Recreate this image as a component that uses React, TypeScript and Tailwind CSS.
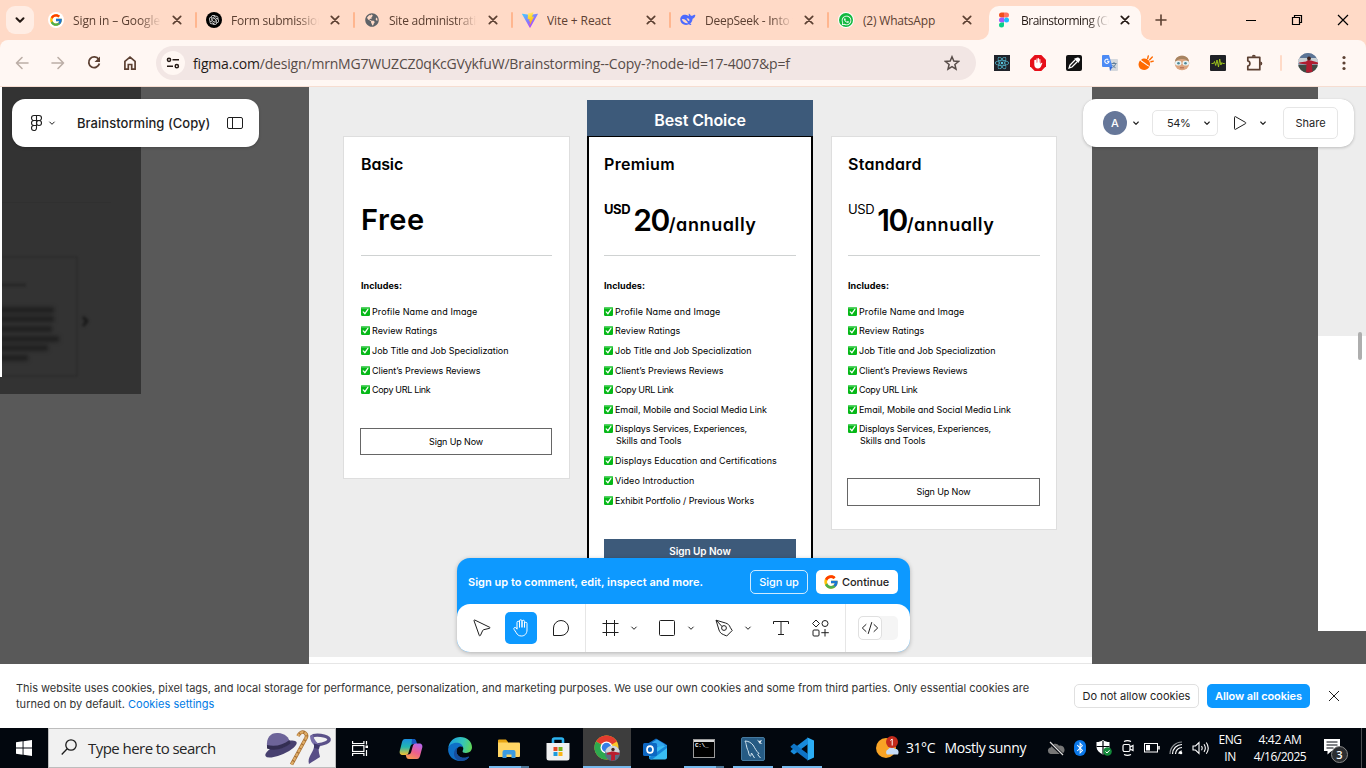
import React from "react";
import { FcGoogle } from "react-icons/fc";
import { FaReact, FaWhatsapp, FaBluetoothB, FaGlobeAmericas } from "react-icons/fa";
import { RiOpenaiFill } from "react-icons/ri";

type IconProps = { d: string; size?: number; sw?: number; className?: string; box?: number };

function Line({ d, size = 16, sw = 1, className = "", box }: IconProps) {
  const b = box ?? size;
  return (
    <svg width={size} height={size} viewBox={`0 0 ${b} ${b}`} fill="none" stroke="currentColor" strokeWidth={sw} strokeLinecap="round" strokeLinejoin="round" className={`shrink-0 ${className}`}>
      <path d={d} />
    </svg>
  );
}

function Slot({ w, children, className = "" }: { w: string; children?: React.ReactNode; className?: string }) {
  return <div className={`flex h-full shrink-0 items-center justify-center ${w} ${className}`}>{children}</div>;
}

/* ---------- Browser chrome ---------- */

function GoogleBadge() {
  return (
    <span className="flex h-4 w-4 items-center justify-center rounded-full bg-white">
      <FcGoogle size={14} />
    </span>
  );
}

function ViteIcon() {
  return (
    <svg width="16" height="16" viewBox="0 0 16 16">
      <defs>
        <linearGradient id="viteA" x1="0" y1="0" x2="0.7" y2="1"><stop stopColor="#41d1ff" /><stop offset="1" stopColor="#bd34fe" /></linearGradient>
        <linearGradient id="viteB" x1="0.4" y1="0" x2="0.6" y2="1"><stop stopColor="#ffea83" /><stop offset="0.3" stopColor="#ffdd35" /><stop offset="1" stopColor="#ffa800" /></linearGradient>
      </defs>
      <path d="M15.8 2.3 8.4 15.4a.5.5 0 0 1-.8 0L.1 2.3a.4.4 0 0 1 .5-.6L8 3l7.3-1.3a.4.4 0 0 1 .5.6z" fill="url(#viteA)" />
      <path d="m11.600.2-5.400 1a.2.2 0 0 0-.2.200l-.3 5.600c0 .2.100.300.300.200l1.500-.3-.4 2.300.200.200 1-.3-.7 3.700c0 .2.200.300.300.100l4-8c.100-.2 0-.3-.2-.3l-1.600.3.900-3.200z" fill="url(#viteB)" />
    </svg>
  );
}

function WhaleIcon() {
  return (
    <svg width="17" height="16" viewBox="0 0 17 16">
      <path d="M.3 7.500C.2 4.300 2.700 2 6 2.400c1.500.1 2.300 1 3.200 1.400.6-.5-.4-1.500.3-2.600.6.9 1.800 1.200 2 2.300 1.500.4 2.400-.6 3.900-1.100.5-.1 1 .1.900.6-.3 2-1.300 3.400-2.900 3.700-.3 2.600-1.300 4.100-2.500 5 .4.500 1 .9 1.300 1.300-1 .4-2 .1-2.800-.5C5.300 14.500.400 12.100.300 7.500z" fill="#4d6bfe" />
      <path d="M2 7.200c2-1 5.300 1.300 6.500 4.200-2.800.4-6-1.500-6.500-4.200z" fill="#ffdac7" />
      <path d="M7 6.200c1.400-.6 2.700.3 3.200 2.200L8.700 9z" fill="#ffdac7" />
    </svg>
  );
}

function WhatsAppIcon() {
  return (
    <span className="flex h-4 w-4 items-center justify-center rounded-full bg-white">
      <span className="flex h-3.5 w-3.5 items-center justify-center rounded-full bg-[#12b83e]"><FaWhatsapp size={11} color="#fff" /></span>
    </span>
  );
}

function FigmaColor() {
  return (
    <svg width="16" height="16" viewBox="0 0 16 16">
      <path d="M5.500.500H8v5H5.500a2.500 2.500 0 0 1 0-5z" fill="#f24e1e" />
      <path d="M8 .500h2.500a2.500 2.500 0 0 1 0 5H8z" fill="#ff7262" />
      <path d="M5.500 5.500H8v5H5.500a2.500 2.500 0 0 1 0-5z" fill="#a259ff" />
      <circle cx="10.500" cy="8" r="2.500" fill="#1abcfe" />
      <path d="M5.500 10.500H8V13a2.500 2.500 0 1 1-2.500-2.500z" fill="#0acf83" />
    </svg>
  );
}

const tabs = [
  { icon: <GoogleBadge />, title: "Sign in – Google", fade: true, tr: "tracking-[-0.1px]" },
  { icon: <span className="flex h-4 w-4 items-center justify-center rounded-full bg-black"><RiOpenaiFill size={12} color="#fff" /></span>, title: "Form submission", fade: true, tr: "tracking-[-0.2px]" },
  { icon: <FaGlobeAmericas size={14} color="#5f6368" />, title: "Site administration", fade: true, tr: "tracking-[-0.25px]" },
  { icon: <ViteIcon />, title: "Vite + React", fade: false, tr: "tracking-[-0.1px]" },
  { icon: <WhaleIcon />, title: "DeepSeek - Into the", fade: true, tr: "tracking-[-0.25px]" },
  { icon: <WhatsAppIcon />, title: "(2) WhatsApp", fade: false, tr: "tracking-[-0.2px]" },
  { icon: <FigmaColor />, title: "Brainstorming (Copy)", fade: true, tr: "tracking-[-0.49px]" },
];

function TabStrip() {
  return (
    <div className="flex h-10 shrink-0 items-center bg-[#ffdac7]">
      <div className="ml-1.5 mr-[6px] flex h-7 w-7 items-center justify-center rounded-[9px] bg-[#ffede4] text-[#241914]">
        <Line d="M4.500 6.200 8 9.700l3.500-3.500" sw={2} />
      </div>
      {tabs.map((t, i) => {
        const active = i === 6;
        return (
          <div key={i} className={`relative flex h-10 items-center ${active ? "w-[154px]" : "w-[158px]"}`}>
            {active && (
              <>
                <div className="absolute bottom-0 left-px right-px top-1.5 rounded-t-[10px] bg-[#fff7f3]" />
                <svg className="absolute -left-[9px] bottom-0" width="10" height="10" viewBox="0 0 10 10"><path d="M10 0v10H0A10 10 0 0 0 10 0z" fill="#fff7f3" /></svg>
                <svg className="absolute -right-[9px] bottom-0" width="10" height="10" viewBox="0 0 10 10"><path d="M0 0v10h10A10 10 0 0 1 0 0z" fill="#fff7f3" /></svg>
              </>
            )}
            <div className="relative ml-2 flex h-4 w-4 items-center justify-center">{t.icon}</div>
            <div className={`relative ml-[9px] h-[17px] w-[88px] overflow-hidden whitespace-nowrap pt-px text-[12px] leading-4 ${active ? "text-[#241914]" : "text-[#5c4032]"} ${t.tr} ${t.fade ? "[mask-image:linear-gradient(to_right,black_75%,transparent_100%)]" : ""}`}>{t.title}</div>
            <div className={`relative ml-2 flex h-4 w-4 items-center justify-center ${active ? "text-[#241914]" : "text-[#5c4032]"}`}>
              <Line d="M4.300 4.300l7.400 7.400M11.700 4.300l-7.400 7.400" sw={1.700} />
            </div>
            {i < 5 && <div className="ml-[10px] h-4 w-0.5 rounded bg-[#ffb68f]" />}
          </div>
        );
      })}
      <Slot w="w-9" className="pl-0.5 text-[#5c4032]"><Line d="M8 3v10M3 8h10" sw={1.600} /></Slot>
      <div className="flex-1" />
      <Slot w="w-[46px]" className="text-black"><svg width="12" height="12"><path d="M1 6.500h10" stroke="currentColor" /></svg></Slot>
      <Slot w="w-[46px]" className="text-black"><svg width="12" height="12" fill="none"><path d="M1.500 3.500h7v7h-7zM3.500 3.500v-2h7v7h-2" stroke="currentColor" strokeWidth="1.200" /></svg></Slot>
      <Slot w="w-[46px]" className="text-black"><svg width="12" height="12"><path d="M1 1l10 10M11 1L1 11" stroke="currentColor" strokeWidth="1.200" /></svg></Slot>
    </div>
  );
}

function Extensions() {
  return (
    <>
      <Slot w="w-9"><span className="flex h-4 w-4 items-center justify-center bg-[#20232a]"><FaReact size={14} color="#58c4dc" /></span></Slot>
      <Slot w="w-9">
        <svg width="16" height="16" viewBox="0 0 16 16"><path d="M4.700 0h6.600L16 4.700v6.600L11.300 16H4.700L0 11.300V4.700z" fill="#e60f19" /><path d="M4.300 7.300v2.500c0 2.300 1.500 3.700 3.700 3.700 1.900 0 2.600-1 3.100-2.200l1.300-3.200c-.5-.5-1.200-.3-1.500.3l-.5.7V4.500c0-.7-1.100-.7-1.100 0v3h-.3V3.400c0-.7-1.100-.7-1.100 0v4.100h-.3V3.700c0-.7-1.100-.7-1.100 0v4h-.3V5.200c0-.7-1.900-.7-1.900 0z" fill="#fff" /></svg>
      </Slot>
      <Slot w="w-9">
        <svg width="16" height="16" viewBox="0 0 16 16"><rect width="16" height="16" rx="2" fill="#111" /><path d="M9 5 4 10l-.9 2.900L6 12l5-5" fill="none" stroke="#fff" strokeWidth="1.300" /><path d="m8 3.700 4.300 4.300 1.700-2.800c.7-1.300-1.200-3.200-2.600-2.600z" fill="#fff" /></svg>
      </Slot>
      <Slot w="w-9">
        <svg width="16" height="16" viewBox="0 0 16 16"><path d="M6 4h9a1 1 0 0 1 1 1v10a1 1 0 0 1-1 1H8z" fill="#d5d8dc" /><path d="M9.500 8.500h5M12 7v1.500m1.800 0c-.6 2-2 3.300-3.300 4M10.500 10c.6 1.200 1.800 2.200 3 2.700" stroke="#5f7f9c" fill="none" /><path d="M1 0h6l3.500 12H1a1 1 0 0 1-1-1V1a1 1 0 0 1 1-1z" fill="#4c8bf5" /><path d="M7.500 12h3L8 16z" fill="#3367d6" /><path d="M6.300 4.700A2.100 2.100 0 1 0 7 6.300H5" fill="none" stroke="#fff" strokeWidth="1.100" /></svg>
      </Slot>
      <Slot w="w-9">
        <svg width="16" height="16" viewBox="0 0 16 16"><path d="M2 5.500C-.3 8.300.2 12.600 3.300 14.300c3 1.600 6.800.4 8.200-2.500z" fill="#ff6a00" /><path d="M3 5C5 2.800 9 3.200 10.800 5.600c1.200 1.700 1.500 3.800.9 5.700z" fill="#ff6a00" /><path d="M9.700 3.300 10.300.9M11.700 4.700l2.600-2.600M13 6.700l2.300-.6" stroke="#ff6a00" strokeWidth="1.400" strokeLinecap="round" /><path d="M3 6l7.500 5.200" stroke="#fff7f3" strokeWidth=".8" /></svg>
      </Slot>
      <Slot w="w-9">
        <svg width="16" height="16" viewBox="0 0 16 16"><circle cx="8" cy="8" r="7.300" fill="#dca57f" /><path d="M1 7C1 3 4 .7 8 .7S15 3 15 7c-2-2-4-3-7-3S3 5 1 7z" fill="#a78461" /><rect x="1" y="5.800" width="6.500" height="4.700" rx="2.300" fill="#e8f3f5" /><rect x="8.500" y="5.800" width="6.500" height="4.700" rx="2.300" fill="#e8f3f5" /><circle cx="4.500" cy="8.200" r="1.300" fill="#4e8796" /><circle cx="11.500" cy="8.200" r="1.300" fill="#4e8796" /><path d="M6 12.800h4" stroke="#b0674f" /></svg>
      </Slot>
      <Slot w="w-9">
        <svg width="16" height="16" viewBox="0 0 16 16"><rect width="16" height="16" rx="1" fill="#1f2125" /><path d="M1.500 8.500h2l1-2 1.200 4L7 5l1.500 7L9.700 4l1.200 6 1-2.500.8 1h2" fill="none" stroke="#a5cf1b" strokeWidth=".9" /></svg>
      </Slot>
      <Slot w="w-9" className="text-[#5c4032]">
        <svg width="18" height="18" viewBox="0 0 18 18" fill="none"><path d="M2.800 3.300h12v12.400h-12v-3.700c2.800-.3 2.800-4.700 0-5z" stroke="currentColor" strokeWidth="1.700" strokeLinejoin="round" /><path d="M6.800 2.800a2 2 0 0 1 4 0zM15.300 7.500a2 2 0 0 1 0 4z" fill="currentColor" /></svg>
      </Slot>
      <Slot w="w-[18px]"><div className="h-4 w-0.5 rounded bg-[#ffdac7]" /></Slot>
      <Slot w="w-9">
        <svg width="20" height="20" viewBox="0 0 20 20"><defs><clipPath id="pf"><circle cx="10" cy="10" r="10" /></clipPath></defs><g clipPath="url(#pf)"><rect width="20" height="20" fill="#8b9cae" /><rect width="20" height="7" fill="#5c7495" /><path d="M0 5h20v5H0z" fill="#c9cfd3" /><path d="M0 12h20v8H0z" fill="#3f4a42" /><path d="M1 9.500l7-1 2-1.500 3 .5 7 2v1.800l-6-.3.5 8.500H8l.5-8-7-1z" fill="#b01d30" /><circle cx="11" cy="5.500" r="1.900" fill="#41231d" /></g></svg>
      </Slot>
      <Slot w="w-9" className="text-[#5c4032]"><svg width="4" height="16" fill="currentColor"><circle cx="2" cy="2.500" r="1.600" /><circle cx="2" cy="8" r="1.600" /><circle cx="2" cy="13.500" r="1.600" /></svg></Slot>
    </>
  );
}

function AddressBar() {
  return (
    <div className="shrink-0 bg-[#ffdac7]">
      <div className="flex h-[47px] items-center rounded-t-[8px] border-b border-[#f6ddd1] bg-[#fff7f3] pl-1">
        <Slot w="w-9" className="text-[#bcaea7]"><Line d="M14 8H2.500M8 2.500 2.500 8 8 13.500" sw={1.600} /></Slot>
        <Slot w="w-9" className="text-[#bcaea7]"><Line d="M2 8h11.500M8 2.500 13.500 8 8 13.500" sw={1.600} /></Slot>
        <Slot w="w-9" className="text-[#5c4032]"><svg width="16" height="16" fill="none"><path d="M12.700 4.300A5.400 5.400 0 1 0 13.400 8.600" stroke="currentColor" strokeWidth="1.800" /><path d="M14 1.500V7H8.500z" fill="currentColor" /></svg></Slot>
        <Slot w="w-9" className="text-[#5c4032]"><svg width="16" height="16" fill="none"><path d="M2.900 6.300 8 2.200l5.100 4.100v7.800H9.700V9.500H6.300v4.600H2.900z" stroke="currentColor" strokeWidth="1.700" /></svg></Slot>
        <div className="ml-2 flex h-[34px] w-[820px] items-center rounded-full bg-[#f2e6e4] pl-[5px]">
          <div className="flex h-6 w-6 items-center justify-center rounded-full bg-[#fff7f3] text-[#241914]">
            <svg width="14" height="14" fill="none" stroke="currentColor" strokeWidth="1.500"><circle cx="3" cy="3.800" r="1.600" /><path d="M6.500 3.800H13M1 10.200h6" /><circle cx="10.800" cy="10.200" r="1.600" /></svg>
          </div>
          <div className="ml-2 whitespace-nowrap pt-px text-[14px] leading-5 tracking-[-0.18px] text-[#574c48]"><span className="text-[#1f1a18]">figma.com</span>/design/mrnMG7WUZCZ0qKcGVykfuW/Brainstorming--Copy-?node-id=17-4007&amp;p=f</div>
          <div className="flex-1" />
          <svg className="mr-4 text-[#574c48]" width="16" height="16" fill="none"><path d="M8 1.800l1.800 4.300 4.700.4-3.600 3 1.100 4.600L8 11.700 4 14.100l1.100-4.600-3.600-3 4.700-.4z" stroke="currentColor" strokeWidth="1.500" /></svg>
        </div>
        <div className="flex h-full flex-1 items-center pl-2"><Extensions /></div>
      </div>
    </div>
  );
}

/* ---------- Pricing design on the canvas ---------- */

type Feature = { text: string; tr: string; second?: string; tall?: boolean };
const base: Feature[] = [
  { text: "Profile Name and Image", tr: "tracking-[0.1px]" },
  { text: "Review Ratings", tr: "tracking-[0.04px]" },
  { text: "Job Title and Job Specialization", tr: "tracking-[-0.01px]" },
  { text: "Client’s Previews Reviews", tr: "tracking-[-0.04px]" },
  { text: "Copy URL Link", tr: "tracking-[-0.31px]" },
];
const more: Feature[] = [
  ...base,
  { text: "Email, Mobile and Social Media Link", tr: "tracking-[-0.05px]" },
  { text: "Displays Services, Experiences,", tr: "tracking-[-0.13px]", second: "Skills and Tools" },
];
const all: Feature[] = [
  ...more,
  { text: "Displays Education and Certifications", tr: "tracking-[0.04px]", tall: true },
  { text: "Video Introduction", tr: "tracking-[0.07px]", tall: true },
  { text: "Exhibit Portfolio / Previous Works", tr: "tracking-[-0.06px]", tall: true },
];

function Check() {
  return (
    <svg width="9" height="9" viewBox="0 0 9 9" className="mb-px mr-[2px] shrink-0">
      <rect width="9" height="9" rx="1.200" fill="#06b818" />
      <rect x=".2" y=".2" width="8.600" height="1.200" rx=".6" fill="#6fdc7c" />
      <path d="M2.200 4.900 3.900 6.700 6.900 2.300" fill="none" stroke="#fff" strokeWidth="1.200" strokeLinecap="round" />
    </svg>
  );
}

function PlanBody({ name, nameTr, price, features, filled }: { name: string; nameTr: string; price: React.ReactNode; features: Feature[]; filled?: boolean }) {
  return (
    <>
      <div className={`pt-4 text-[16px] font-semibold leading-[22px] ${nameTr}`}>{name}</div>
      <div className="mt-[25px] flex h-10 items-start">{price}</div>
      <div className="mt-[15px] h-px bg-[#cfd2d2]" />
      <div className="mt-6 text-[9px] font-bold leading-3 tracking-[0.05px]">Includes:</div>
      <div className="mt-[10px] flex flex-col">
        {features.map((f) => (
          <div key={f.text} className={f.second ? "h-[31px]" : f.tall ? "h-[20.2px]" : "h-[19.6px]"}>
            <div className={`flex items-center whitespace-nowrap text-[9px] leading-[12px] ${f.tall ? "h-[20.2px]" : "h-[19.6px]"} ${f.tr}`}><Check />{f.text}</div>
            {f.second && <div className="-mt-[4px] pl-3 text-[9px] leading-[12px] tracking-[-0.05px]">{f.second}</div>}
          </div>
        ))}
      </div>
      <div className={`mt-[27.6px] flex h-[27.4px] items-center justify-center ${filled ? "bg-[#3d5a7a] pb-0.5 text-[10px] font-semibold tracking-[-0.05px] text-white" : "-ml-px border border-[#666] text-[9px] tracking-[-0.13px]"}`}>Sign Up Now</div>
    </>
  );
}

function Price({ value, bold, gap, tr, atr }: { value: string; bold?: boolean; gap: string; tr: string; atr: string }) {
  return (
    <>
      <span className={`-mt-px text-[13px] leading-5 tracking-[-0.4px] ${bold ? "font-bold" : ""}`}>USD</span>
      <div className={`flex items-baseline font-semibold ${gap}`}>
        <span className={`text-[30px] leading-10 ${tr}`}>{value}</span>
        <span className={`text-[18px] leading-10 ${atr}`}>/annually</span>
      </div>
    </>
  );
}

function Pricing() {
  return (
    <div className="flex h-[570px] items-start overflow-hidden bg-[#ededed] pl-[34px] pt-[13px] font-['Inter','Liberation_Sans',sans-serif] text-black [font-feature-settings:'cv11']">
      <div className="mt-9 h-[343px] w-[227px] border border-[#dedede] bg-white pl-[17px] pr-[17px]">
        <PlanBody name="Basic" nameTr="tracking-[-0.15px]" price={<span className="text-[29px] font-semibold leading-10 tracking-[0.5px]">Free</span>} features={base} />
      </div>
      <div className="ml-[17px] w-[226px]">
        <div className="flex h-9 items-center justify-center pt-1 bg-[#3d5a7a] text-[16px] font-semibold tracking-[-0.12px] text-white">Best Choice</div>
        <div className="h-[480px] border-2 border-t-[1.500px] border-black bg-white px-[15px]">
          <PlanBody name="Premium" nameTr="tracking-[0.34px]" price={<Price value="20" bold gap="ml-[3px]" tr="tracking-[-1.5px]" atr="tracking-[0.59px]" />} features={all} filled />
        </div>
      </div>
      <div className="ml-[18px] mt-9 h-[394px] w-[226px] border border-[#dedede] bg-white pl-4 pr-[16px]">
        <PlanBody name="Standard" nameTr="tracking-[0.27px]" price={<Price value="10" gap="ml-[3px]" tr="tracking-[-1.5px]" atr="tracking-[0.59px]" />} features={more} />
      </div>
    </div>
  );
}

function LeftBackdrop() {
  return (
    <div className="flex w-[309px] items-start bg-[#595959]">
      <div className="relative flex h-[307px] w-[141px] items-start overflow-hidden bg-[#333]">
        <div className="relative z-10 h-[290px] w-0.5 bg-white" />
        <div className="mt-[115px] h-px w-[109px] bg-[#303030]" />
        <svg className="absolute left-0 top-[160px]" width="100" height="140" fill="none">
          <g className="blur-[1px]"><path d="M0 10h77v119H0" stroke="#2d2d2d" strokeWidth="1.500" /><path d="M0 38h26" stroke="#2a2a2a" strokeWidth="4" /></g>
          <path className="blur-[2px]" d="M-6 63h60M-6 72h60M-6 82h58M-6 92h65M-6 101h54M-6 111h34" stroke="#1c1c1c" strokeWidth="5" />
          <path className="blur-[1.5px]" d="M83 70l4 4-4 5" stroke="#141414" strokeWidth="2.500" />
        </svg>
      </div>
    </div>
  );
}

/* ---------- Editor overlays ---------- */

const chevron = "M1.700 3 4 5.300 6.300 3";
const panel = "absolute flex h-12 items-center rounded-[13px] bg-white text-[#1e1e1e] shadow-[0_0_0.5px_rgba(0,0,0,0.25),0_1px_3px_rgba(0,0,0,0.2)]";

function FilePanel() {
  return (
    <div className={`${panel} left-3 top-3 w-[247px]`}>
      <svg className="ml-[18px]" width="13" height="18" fill="none" stroke="#1e1e1e" strokeWidth="1.100"><path d="M6.500 1.500H4a2.500 2.500 0 0 0 0 5h2.500zM6.500 1.500H9a2.500 2.500 0 0 1 0 5H6.500zM6.500 6.500H4a2.500 2.500 0 0 0 0 5h2.500zM6.500 11.500H4A2.500 2.500 0 1 0 6.500 14z" /><circle cx="9" cy="9" r="2.500" /></svg>
      <Line d={chevron} size={8} className="ml-[5px]" />
      <div className="ml-[21px] whitespace-nowrap text-[13px] font-medium leading-6 tracking-[0.03px]">Brainstorming (Copy)</div>
      <svg className="ml-[17px]" width="16" height="14" fill="none" stroke="#1e1e1e"><rect x=".5" y="1.500" width="15" height="11" rx="1.500" /><path d="M5.500 1.500v11" /></svg>
    </div>
  );
}

function SharePanel() {
  return (
    <div className={`${panel} left-[1083px] top-3 w-[271px]`}>
      <div className="ml-5 flex h-6 w-6 items-center justify-center rounded-full bg-[#667799] text-[11px] font-medium text-white">A</div>
      <Line d={chevron} size={8} className="ml-[5px]" sw={1.100} />
      <div className="ml-3 flex h-[26px] w-[66px] items-center rounded-[5px] border border-[#e6e6e6] text-[11px]"><span className="ml-[14px] w-6 tracking-[-0.4px]">54%</span><Line d={chevron} size={8} className="ml-3" sw={1.100} /></div>
      <svg className="ml-[15px]" width="14" height="16" fill="none" stroke="#1e1e1e" strokeLinejoin="round"><path d="M1.500 2.300v11.400c0 .6.500.9 1 .6l10-5.700c.5-.3.500-.9 0-1.200l-10-5.700c-.5-.3-1 0-1 .6z" /></svg>
      <Line d={chevron} size={8} className="ml-[12px]" sw={1.100} />
      <div className="ml-4 flex h-8 w-[55px] items-center justify-center rounded-[5px] border border-[#e6e6e6] text-[11px]">Share</div>
    </div>
  );
}

function BottomPanel() {
  return (
    <div className="absolute left-[457px] top-[471px] w-[453px] rounded-[13px] bg-[#0d99ff] shadow-[0_1px_4px_rgba(0,0,0,0.25)]">
      <div className="flex h-[46px] items-center pl-[11px] pt-0.5 text-[11px]">
        <div className="w-[282px] whitespace-nowrap font-semibold tracking-[0.03px] text-white">Sign up to comment, edit, inspect and more.</div>
        <div className="flex h-6 w-[58px] items-center justify-center rounded-[5px] border border-white/80 font-medium text-white">Sign up</div>
        <div className="ml-2 flex h-6 w-[82px] items-center rounded-[5px] bg-white pl-[7px] font-medium text-[#1e1e1e]"><FcGoogle size={16} /><span className="ml-[3px] tracking-[-0.05px]">Continue</span></div>
      </div>
      <div className="flex h-12 items-center rounded-[13px] bg-white text-[#1e1e1e]">
        <div className="flex w-10 items-center justify-center pl-[9px]"><svg width="18" height="18" fill="none" stroke="currentColor" strokeLinejoin="round"><path d="M1 1.700 6.300 16.500c.2.500.8.500 1.100 0l2.300-5c.2-.4.500-.7 1-.8l5.900-1.400c.5-.1.600-.8.100-1L1.700 1c-.4-.2-.8.200-.7.700z" /></svg></div>
        <div className="ml-2 flex h-8 w-8 items-center justify-center rounded-[5px] bg-[#0d99ff] text-white">
          <svg width="20" height="20" viewBox="0 0 20 20" fill="none" stroke="currentColor" strokeLinecap="round" strokeLinejoin="round"><path d="M6 10V4.500a1.250 1.250 0 0 1 2.500 0V9M8.500 9V3a1.250 1.250 0 0 1 2.500 0v6M11 9V3.500a1.250 1.250 0 0 1 2.500 0V9M13.500 9V5.500a1.250 1.250 0 0 1 2.500 0V12c0 3.500-2.200 6-5.500 6-2.800 0-4.200-1.300-5.200-3.200L3 11.300c-.8-1.500 1.100-2.600 2.100-1.300L6 11.200V10" /></svg>
        </div>
        <div className="ml-4 flex w-4 justify-center"><svg width="18" height="18" className="shrink-0" fill="none" stroke="currentColor"><path d="M1.500 16.500V9A7.500 7.500 0 1 1 9 16.500z" strokeLinejoin="round" /></svg></div>
        <div className="ml-4 h-12 w-px bg-[#e6e6e6]" />
        <svg className="ml-4" width="17" height="16" fill="none" stroke="currentColor"><path d="M4.500 0v16M12.500 0v16M.5 3.500h16M.5 12.500h16" /></svg>
        <Line d={chevron} size={8} className="ml-[11px]" />
        <svg className="ml-[21px]" width="16" height="16" fill="none" stroke="currentColor"><rect x=".5" y=".5" width="15" height="15" rx="1" /></svg>
        <Line d={chevron} size={8} className="ml-3" />
        <svg className="ml-5" width="18" height="18" fill="none" stroke="currentColor" strokeLinejoin="round"><path d="M1 1.200 10.500 4c2.500.7 4 2.200 4.700 4.300l2 3.200-5.500 5.500-3.400-1.500C6.200 14.800 4.800 13.300 4 11zM1.200 1.200l6 6.500" /><circle cx="9" cy="9" r="2.400" /></svg>
        <Line d={chevron} size={8} className="ml-[11px]" />
        <svg className="ml-[21px]" width="16" height="16" fill="none" stroke="currentColor"><path d="M.5 4V1.500h15V4M8 1.500v13M5 14.500h6" /></svg>
        <svg className="ml-[22px]" width="18" height="18" fill="none" stroke="currentColor" strokeLinejoin="round"><path d="M5 1 8.500 4.500 5 8 1.500 4.500zM14 10v7.500M10.300 13.700h7.500" /><circle cx="14" cy="4.500" r="3" /><rect x="2" y="11" width="6" height="6" rx="1" /></svg>
        <div className="ml-4 h-12 w-px bg-[#e6e6e6]" />
        <div className="ml-3 flex h-6 w-10 items-center rounded-[5px] bg-[#f5f5f5]">
          <div className="flex h-6 w-6 items-center justify-center rounded-[5px] border border-[#e0e0e0] bg-white"><svg width="18" height="14" className="shrink-0" fill="none" stroke="currentColor" strokeLinecap="round" strokeLinejoin="round"><path d="M5 3.500 1.300 7 5 10.500M13 3.500 16.700 7 13 10.500M10.700 1.500l-3.400 11" /></svg></div>
        </div>
      </div>
    </div>
  );
}

function Canvas() {
  return (
    <div className="relative flex h-[577px] shrink-0 overflow-hidden bg-[#595959] font-['Inter','Liberation_Sans',sans-serif]">
      <LeftBackdrop />
      <div className="flex w-[783px] flex-col border-b border-[#e6e6e6] bg-white"><Pricing /></div>
      <div className="w-[226px] bg-[#595959]" />
      <div className="flex w-12 flex-col">
        <div className="h-[249px] bg-[#ededed]" />
        <div className="h-[295px] bg-white" />
      </div>
      <FilePanel />
      <SharePanel />
      <BottomPanel />
      <div className="absolute left-[1358px] top-[245px] h-7 w-1 rounded-full bg-[#aeaeae]" />
    </div>
  );
}

function CookieBar() {
  return (
    <div className="flex h-16 shrink-0 items-center bg-white pl-4 font-['Inter','Liberation_Sans',sans-serif] text-[11px] text-[#333]">
      <div className="w-[1058px] leading-4 tracking-[-0.021px]">
        <div className="whitespace-nowrap">This website uses cookies, pixel tags, and local storage for performance, personalization, and marketing purposes. We use our own cookies and some from third parties. Only essential cookies are</div>
        <div className="tracking-[0.02px]">turned on by default. <span className="text-[#007be5]">Cookies settings</span></div>
      </div>
      <div className="flex h-6 w-[125px] items-center justify-center rounded-[5px] border border-[#e0e0e0] text-[#1e1e1e]">Do not allow cookies</div>
      <div className="ml-2 flex h-6 w-[103px] items-center justify-center rounded-[5px] bg-[#0d99ff] font-semibold tracking-[-0.1px] text-white">Allow all cookies</div>
      <svg className="ml-[18px]" width="12" height="12"><path d="M1 1l10 10M11 1L1 11" stroke="#1e1e1e" /></svg>
    </div>
  );
}

/* ---------- Taskbar ---------- */

function SearchArt() {
  return (
    <svg width="70" height="38" viewBox="0 0 70 38" className="shrink-0">
      <ellipse cx="18" cy="20" rx="17" ry="5.500" transform="rotate(-24 18 20)" fill="#47406f" />
      <path d="M4 18C3 8 8 3.500 15 4S26 8 27 14c-5 5-15 8-23 4z" fill="#6d6499" />
      <path d="M4 16c8 2 16 0 22.500-5l1 3.500c-6 5-16 8-23.500 5z" fill="#332e52" />
      <path d="M28.500 35.500 43 9c2-4-2-7-5-5.500-1.500.8-2.300 2-3 3.500" fill="none" stroke="#a87033" strokeWidth="3.600" />
      <path d="M28.500 35.500 43 9c2-4-2-7-5-5.500-1.500.8-2.300 2-3 3.500" fill="none" stroke="#deac66" strokeWidth="2.200" strokeDasharray="3.500 1.200" />
      <path d="M48.500 8c3-3.500 16-1.500 17.500 2 .8 3-5 5-12 6" fill="none" stroke="#5b5189" strokeWidth="3.500" />
      <path d="M47 7c0 4 2 8 6 11l5-1c-4-3-7-6-8-11z" fill="#776da8" />
      <path d="M51 18l5 0c-1 5 1 8 1 10-3 2-7 4-11 7-2-7 4-11 5-17z" fill="#584e86" />
      <path d="M51 14.500l6 1.500-1 4-5-1z" fill="#3f376a" />
    </svg>
  );
}

function CopilotIcon() {
  return (
    <svg width="24" height="22" viewBox="0 0 24 22">
      <defs>
        <linearGradient id="cpA" x1="0" y1="0" x2="0" y2="1"><stop stopColor="#1b8fe0" /><stop offset=".5" stopColor="#22b7b0" /><stop offset="1" stopColor="#f5c12e" /></linearGradient>
        <linearGradient id="cpB" x1=".7" y1="0" x2=".2" y2="1"><stop stopColor="#b966e8" /><stop offset=".5" stopColor="#ee5f8e" /><stop offset="1" stopColor="#f89a4c" /></linearGradient>
      </defs>
      <path d="M6 1h8c2 0 2.500 1 3 3l.5 2h-3c-2 0-2.800 1-3.300 3l-1.500 5c-.4 2-1.200 3-3 3H4c-3 0-4-2-3-5L3 4c.6-2 1.500-3 3-3z" fill="url(#cpA)" />
      <path d="M13 1h1.500c2 0 2.500 1 3 3l.5 2h-5.500z" fill="#1757c2" />
      <path d="M18 21h-8c-2 0-2.500-1-3-3l-.3-1.500h2.300c2 0 2.800-1 3.300-3l1.400-5c.5-2 1.300-3 3.200-3H20c3 0 4 2 3 5l-2 7.500c-.6 2-1.500 3-3 3z" fill="url(#cpB)" />
    </svg>
  );
}

function EdgeIcon() {
  return (
    <svg width="24" height="24" viewBox="0 0 24 24">
      <defs><linearGradient id="edA" x1="0" y1=".3" x2="1" y2=".5"><stop stopColor="#1b9de2" /><stop offset=".6" stopColor="#35c6b8" /><stop offset="1" stopColor="#5fd65a" /></linearGradient></defs>
      <path d="M.3 11C1 4.500 6 0 12.300 0 19 0 24 4.800 24 10.300c0 3.400-2.500 5.700-6 5.700-2.500 0-4-1-3.300-2.300C17 10 13 6.800 9 7.300 4.500 7.500 1 9 .3 11z" fill="url(#edA)" />
      <path d="M.2 11.500C.9 8 4.500 5.800 8.500 5.800c3.500 0 6.300 2 6.300 4.700-2-2-6.500-.6-6.300 4 .2 4.700 5.500 7.700 10.500 5.700 1.500-.6 2.200-.6 1.700.2C19 22.700 15.700 24 12 24 5 24-.6 18 .2 11.500z" fill="#0f6fc6" />
      <path d="M8.500 14.500c.2 4.700 5.500 7.700 10.500 5.700 1.500-.6 2.200-.6 1.700.2C19 22.700 15.700 24 12 24c-4-.7-6.200-4-6-7.500.1-2.600 1.500-5 4-6.500-1 1-1.500 2.700-1.500 4.500z" fill="#174d9c" />
    </svg>
  );
}

function ExplorerIcon() {
  return (
    <svg width="22" height="20" viewBox="0 0 22 20">
      <path d="M0 1.500A1 1 0 0 1 1 .5h7l2 2.500v4H0z" fill="#e6a515" /><path d="M0 3.500h21a1 1 0 0 1 1 1V17a1 1 0 0 1-1 1H0z" fill="#ffd564" />
      <path d="M4.500 19v-6a2 2 0 0 1 2-2h9a2 2 0 0 1 2 2v6h-4v-3.500h-5V19z" fill="#3c9be0" />
    </svg>
  );
}

function StoreIcon() {
  return (
    <svg width="24" height="24" viewBox="0 0 24 24">
      <path d="M7 7V3A1.500 1.500 0 0 1 8.500 1.500h7A1.500 1.500 0 0 1 17 3v4" fill="none" stroke="#2cb3ef" strokeWidth="2.600" />
      <path d="M.5 6h23v15a2.500 2.500 0 0 1-2.500 2.500H3A2.500 2.500 0 0 1 .5 21z" fill="#f1f1f1" />
      <path d="M7.500 10h4v4h-4z" fill="#e74b26" /><path d="M12.500 10h4v4h-4z" fill="#79b51c" /><path d="M7.500 15h4v4h-4z" fill="#1e9bdc" /><path d="M12.500 15h4v4h-4z" fill="#fbb416" />
    </svg>
  );
}

function ChromeIcon() {
  return (
    <svg width="27" height="27" viewBox="0 0 27 27">
      <circle cx="12.500" cy="12.500" r="12" fill="#f9c82a" />
      <path d="M12.500 12.500 2.100 6.500A12 12 0 0 1 22.900 6.500z" fill="#e33b2e" />
      <path d="M2.100 6.500A12 12 0 0 0 12.500 24.500l5-9-5-3z" fill="#2da94f" />
      <circle cx="12.500" cy="12.500" r="6" fill="#fff" /><circle cx="12.500" cy="12.500" r="4.700" fill="#357ee8" />
      <circle cx="18.500" cy="18.500" r="7.500" fill="#5b6d85" /><path d="M11.500 15.500a7.500 7.500 0 0 1 14 0v2h-14z" fill="#cfd6dc" /><path d="M13 18l4.500-1.500 2 0 6 1.500v1.500l-4.500.5v5l-4 .8.300-6-4.300-.3z" fill="#bb1c2e" /><circle cx="19" cy="14.500" r="1.700" fill="#46261f" />
    </svg>
  );
}

function OutlookIcon() {
  return (
    <svg width="24" height="22" viewBox="0 0 24 22">
      <path d="M4 6 13 .500 23.500 6.500V14H4z" fill="#1068bf" /><path d="M9 4.500l5-3 8 5-4 5z" fill="#32a6ee" />
      <path d="M6 11l18-4v12.500A2 2 0 0 1 22 21.500H8a2 2 0 0 1-2-2z" fill="#39bdf2" /><path d="M24 7v3L9 21.500H8a2 2 0 0 1-2-2z" fill="#1585d8" />
      <rect y="5" width="14" height="13" rx="1.500" fill="#0d67c2" /><ellipse cx="7" cy="11.500" rx="3" ry="3.400" fill="none" stroke="#fff" strokeWidth="1.700" />
    </svg>
  );
}

function TerminalIcon() {
  return (
    <div className="flex h-[19px] w-[22px] flex-col border border-[#9b9b9b] bg-black">
      <div className="h-[2px] bg-[#d8d8d8]" />
      <div className="pl-px font-['Liberation_Mono',monospace] text-[6px] font-bold leading-[8px] tracking-[-0.3px] text-white">C:\_</div>
    </div>
  );
}

function WorkbenchIcon() {
  return (
    <svg width="24" height="24" viewBox="0 0 24 24">
      <rect x=".5" y=".5" width="23" height="23" rx="1.500" fill="#265b84" stroke="#45799f" />
      <path d="M4 4c3 0 6 1.500 8 4 2 3 3 6 6 8.500-1 0-1.500.5-1 1.500l2.500 3M4 4c1 2 1 3 1.500 5 .5 3 1.500 4 2 6 .5 3 1 4 2 4 .7 0 .5-2 1-3l3 5" fill="none" stroke="#d4e6f0" /><path d="M16 2.500l2 1.500 3-1-1.500 2.500L21.500 7l-3-.5z" fill="#e5eef3" />
    </svg>
  );
}

function CodeIcon() {
  return (
    <svg width="25" height="24" viewBox="0 0 25 24">
      <path d="M17.500.500 24 3.500v17l-6.500 3z" fill="#2badf5" />
      <path d="M18 .500v6.500L4 17.500 1 15c-.5-.4-.5-1 0-1.500z" fill="#188bdb" /><path d="M18 23.500V17L4 6.500 1 9c-.5.4-.5 1 0 1.500z" fill="#0f74c5" />
    </svg>
  );
}

function TaskApp({ children, ml = "ml-[9px]", open = false, split = false, active = false }: { children: React.ReactNode; ml?: string; open?: boolean; split?: boolean; active?: boolean }) {
  return (
    <div className={`flex h-10 shrink-0 flex-col ${ml} ${active ? "w-12 bg-[#3d3d3d]" : "w-10"}`}>
      <div className="flex h-[38px] items-center justify-center pt-[3px]">{children}</div>
      {(open || active) && <div className="flex h-0.5"><div className="flex-1 bg-[#76b9ed]" />{split && <div className="w-2 bg-[#4c7697]" />}</div>}
    </div>
  );
}

function Tray() {
  return (
    <>
      <Slot w="w-6"><svg width="18" height="15" viewBox="0 0 18 15"><path d="M3.500 13a3.300 3.300 0 0 1 .3-6.500A4.500 4.500 0 0 1 12 4.800 4 4 0 0 1 14.500 13z" fill="#777" /><path d="M2 1l14 13" stroke="#02050b" strokeWidth="3" /><path d="M3 1l13 13" stroke="#ddd" strokeWidth="1.300" /></svg></Slot>
      <Slot w="w-6"><span className="flex h-4 w-3 items-center justify-center rounded-full bg-[#0a78ea]"><FaBluetoothB size={12} color="#fff" /></span></Slot>
      <Slot w="w-6"><svg width="16" height="16"><path d="M7 0c2 1.400 4 2 6.500 2v5c0 3-2.500 5.500-6.500 7.500C3 12.500.5 10 .5 7V2C3 2 5 1.400 7 0z" fill="#fff" /><path d="M7 1v13M.5 6.500h13" stroke="#02050b" strokeWidth="1.200" /><circle cx="11.500" cy="11.500" r="4.300" fill="#138a3a" /><path d="M9.500 11.500l1.500 1.500 2.600-2.800" fill="none" stroke="#fff" /></svg></Slot>
      <Slot w="w-6"><svg width="14" height="16" fill="none" stroke="#fff" strokeWidth="1.200"><rect x="2" y="4.500" width="7" height="7" rx="1.500" /><path d="M9 7l3-1.500v5L9 9M3 1.500c2-1 5-1 7 0M3 14.500c2 1 5 1 7 0" /></svg></Slot>
      <Slot w="w-6"><svg width="16" height="10" fill="none" stroke="#fff"><rect x=".5" y=".5" width="13" height="8.500" /><path d="M15 3v3.500" strokeWidth="1.500" /><path d="M2 2h4v5.500H2z" fill="#fff" stroke="none" /></svg></Slot>
      <Slot w="w-6"><svg width="14" height="14" fill="none" stroke="#fff" strokeWidth="1.200"><path d="M10 13a3 3 0 0 1 3-3M6.500 13A6.500 6.500 0 0 1 13 6.500M3.500 13A9.500 9.500 0 0 1 13 3.500" /><path d="M1 13A12 12 0 0 1 13 1" stroke="#8d9094" /><circle cx="12" cy="12" r="1.300" fill="#fff" stroke="none" /></svg></Slot>
      <Slot w="w-6"><svg width="17" height="14" fill="none" stroke="#fff" strokeWidth="1.100"><path d="M1 5h2.500L7 1.500v11L3.500 9H1zM9.500 5c.8 1.200.8 3 0 4.200M12 3.200c1.600 2.300 1.600 5.400 0 7.700M14.300 1.500c2.300 3.400 2.300 8 0 11.200" /></svg></Slot>
    </>
  );
}

function Taskbar() {
  return (
    <div className="flex h-10 shrink-0 items-center bg-[#02070e] text-white">
      <Slot w="w-12"><svg width="16" height="16" fill="#fff"><path d="M0 2.200 6.600 1.300v6.200H0zM7.500 1.200 16 0v7.500H7.500zM0 8.400h6.600v6.300L0 13.800zM7.500 8.400H16V16l-8.500-1.200z" /></svg></Slot>
      <div className="flex h-10 w-72 items-center border border-[#bdbdbd] bg-[#f1f1f1] pl-3 text-[#262626]">
        <svg width="16" height="17" className="-mt-0.5 shrink-0" fill="none" stroke="#1c1c1c" strokeWidth="1.300"><circle cx="10" cy="6" r="5.200" /><path d="M6.200 9.800.7 15.500" /></svg>
        <div className="ml-[11px] w-[175px] whitespace-nowrap text-[15px] leading-5 tracking-[-0.55px]">Type here to search</div>
        <SearchArt />
      </div>
      <TaskApp ml="ml-1"><svg width="17" height="17" fill="none" stroke="#fff" strokeWidth="1.200"><path d="M.6 1v2.500h11.300V1M.6 16v-2.500h11.300V16M14.500 1v3.500M14.500 10v6" /><rect x=".6" y="5.500" width="11.300" height="6" /><path d="M13.500 5.500h2.500v2.500h-2.500z" fill="#fff" stroke="none" /></svg></TaskApp>
      <TaskApp ml="ml-[11px]"><CopilotIcon /></TaskApp>
      <TaskApp><EdgeIcon /></TaskApp>
      <TaskApp open split><ExplorerIcon /></TaskApp>
      <TaskApp><StoreIcon /></TaskApp>
      <TaskApp ml="ml-[5px]" active><ChromeIcon /></TaskApp>
      <TaskApp ml="ml-[4px]"><OutlookIcon /></TaskApp>
      <TaskApp open split><TerminalIcon /></TaskApp>
      <TaskApp open><WorkbenchIcon /></TaskApp>
      <TaskApp open><CodeIcon /></TaskApp>
      <svg className="ml-[53px]" width="26" height="24" viewBox="0 0 26 24"><circle cx="11" cy="12" r="10" fill="#f8a325" /><path d="M12 18.500a3 3 0 0 1 1-5 4 4 0 0 1 7-.500c3-.5 4.500 2.500 3 5.500z" fill="#c6dcf8" /><circle cx="17" cy="6" r="6" fill="#c42b1c" /><path d="M15.300 4.500 17.200 3v6.500" stroke="#fff" fill="none" /></svg>
      <div className="ml-[5px] flex w-[138px] text-[14px] leading-5"><span className="w-[38.500px] tracking-[-0.45px]">31°C</span><span className="whitespace-nowrap tracking-[-0.4px]">Mostly sunny</span></div>
      <div className="flex h-10 items-center"><Tray /></div>
      <div className="w-[36px] text-center text-[12px] leading-[17px] tracking-[-0.45px]"><div>ENG</div><div>IN</div></div>
      <div className="w-[64px] text-center text-[12px] leading-[17px] tracking-[-0.5px]"><div className="tracking-[-0.3px]">4:42 AM</div><div>4/16/2025</div></div>
      <div className="relative ml-3 h-7 w-7">
        <svg width="28" height="28"><path d="M0 5h16v12H7.500L3.500 20.500V17H0z" fill="#fff" /><path d="M2.500 8h11M2.500 11h11M2.500 14h7" stroke="#02070e" /></svg>
        <div className="absolute left-[7px] top-[12px] flex h-[17px] w-[17px] items-center justify-center rounded-full border border-[#888] bg-[#2b2d30] text-[11px] font-semibold leading-3">3</div>
      </div>
      <div className="ml-auto mr-1 h-10 w-px bg-[#4a4d51]" />
    </div>
  );
}

export default function App() {
  return (
    <div className="flex h-[768px] w-[1366px] flex-col overflow-hidden font-['Open_Sans','Noto_Sans',sans-serif]">
      <TabStrip />
      <AddressBar />
      <Canvas />
      <CookieBar />
      <Taskbar />
    </div>
  );
}
